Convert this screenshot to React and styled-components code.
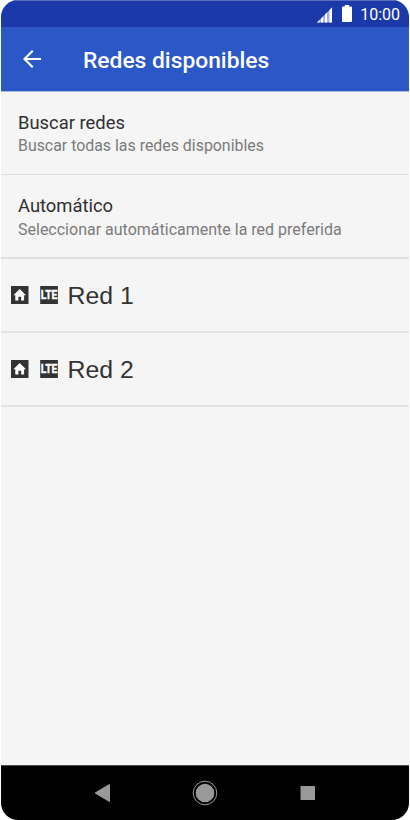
import styled, { createGlobalStyle } from "styled-components"

const GlobalStyle = createGlobalStyle`
    * {
        box-sizing: border-box;
    }
    body {
        margin: 0;
        background-color: #fff;
        font-family: Roboto, sans-serif;
    }
`

const Phone = styled.div`
    display: flex;
    flex-direction: column;
    width: 408px;
    height: 820px;
    margin-left: 1px;
    border-radius: 17px;
    overflow: hidden;
    background-color: #f5f5f5;
`

const StatusBar = styled.div`
    height: 27px;
    display: flex;
    align-items: center;
    justify-content: flex-end;
    padding: 0 9px 0 0;
    color: white;
    background-color: #1c39a9;
    border-top: 1px solid #5a6fc0;
`

const SignalIcon = styled.svg`
    display: block;
    width: 16px;
    height: 16px;
    margin-top: 1px;
`

const BatteryIcon = styled.svg`
    display: block;
    width: 10px;
    height: 17px;
    margin: 0 0 1px 9px;
`

const Clock = styled.span`
    font-size: 16px;
    line-height: 20px;
    margin: 2px 0 0 8px;
`

const Header = styled.div`
    height: 65px;
    display: flex;
    align-items: center;
    padding: 0 0 0 22px;
    color: white;
    background-color: #2b57c7;
    border-bottom: 1px solid #a9b9e3;
`

const Title = styled.h1`
    margin: 4px 0 0 41px;
    font-size: 22.8px;
    font-weight: 500;
    line-height: 28px;
    white-space: nowrap;
`

const Content = styled.div`
    flex: 1;
`

const Option = styled.div`
    height: ${props => props.height}px;
    padding: 20px 17px 0;
    border-bottom: ${props => props.line}px solid #dfdfdf;
`

const OptionTitle = styled.div`
    font-size: 18.4px;
    line-height: 22px;
    color: #303030;
`

const OptionText = styled.div`
    margin-top: ${props => props.gap}px;
    font-size: ${props => props.size}px;
    line-height: 20px;
    color: #7b7b7b;
    white-space: nowrap;
`

const Network = styled.div`
    height: 74px;
    display: flex;
    align-items: center;
    padding-left: 9px;
    border-bottom: 2px solid #e3e3e3;
    color: #333;
`

const NetworkIcon = styled.svg`
    display: block;
    width: 19px;
    height: 18px;
    margin: 0 10px 1px 0;
    overflow: visible;
`

const LteText = styled.text`
    fill: white;
    font-family: Roboto, sans-serif;
    font-size: 12px;
    font-weight: 700;
    stroke: white;
    stroke-width: 0.4px;
`

const NetworkName = styled.span`
    font-family: "Liberation Sans", Arial, sans-serif;
    font-size: 24.8px;
    line-height: 30px;
    margin: 2px 0 0 -0.4px;
`

const NavBar = styled.div`
    height: 55px;
    display: flex;
    align-items: center;
    background-color: #000;
    border-top: 1px solid #484d4a;
`

const NavIcon = styled.svg`
    display: block;
    width: 26px;
    height: 26px;
    margin: 0 0 1px ${props => props.$gap}px;
`

const networks = ["Red 1", "Red 2"]

const App = () => {
    return (
        <>
            <GlobalStyle />
            <Phone>
                <StatusBar>
                    <SignalIcon viewBox="0 0 16 16">
                        <path d="M0 15.5L15 0.5V15.5Z" fill="#a9b5de" />
                        <path d="M0.5 15.5V15L2.5 13V15.5ZM4 15.5V11.5L6 9.5V15.5ZM8 15.5V7.5L10 5.5V15.5ZM12.5 15.5V3L15 0.5V15.5Z" fill="#fff" />
                    </SignalIcon>
                    <BatteryIcon viewBox="0 0 10 17">
                        <path d="M2.8 0H7.2V1.6H9Q10 1.6 10 2.6V16Q10 17 9 17H1Q0 17 0 16V2.6Q0 1.6 1 1.6H2.8Z" fill="#fff" />
                    </BatteryIcon>
                    <Clock>10:00</Clock>
                </StatusBar>
                <Header>
                    <svg width="19" height="18" viewBox="0 0 19 18" fill="none" stroke="#fff" strokeWidth="2.1">
                        <path d="M18 9H1.5M9.7 0.8L1.5 9L9.7 17.2" />
                    </svg>
                    <Title>Redes disponibles</Title>
                </Header>
                <Content>
                    <Option height={83} line={1}>
                        <OptionTitle>Buscar redes</OptionTitle>
                        <OptionText gap={2} size={15.9}>Buscar todas las redes disponibles</OptionText>
                    </Option>
                    <Option height={84} line={2}>
                        <OptionTitle>Automático</OptionTitle>
                        <OptionText gap={3} size={16}>Seleccionar automáticamente la red preferida</OptionText>
                    </Option>
                    {networks.map(name => (
                        <Network key={name}>
                            <NetworkIcon viewBox="0 0 19 18">
                                <rect x="1" width="17.5" height="18" fill="#333" />
                                <path d="M9.7 3L3.4 9.3H5.3V14.5H8.4V10.8H11.1V14.5H14.1V9.3H16Z" fill="#fff" />
                            </NetworkIcon>
                            <NetworkIcon viewBox="0 0 19 18">
                                <rect x="1.2" width="17.7" height="18" fill="#333" />
                                <LteText x="1.8" y="13.3" textLength="16.6" lengthAdjust="spacingAndGlyphs">LTE</LteText>
                            </NetworkIcon>
                            <NetworkName>{name}</NetworkName>
                        </Network>
                    ))}
                </Content>
                <NavBar>
                    <NavIcon $gap={88} viewBox="0 0 26 26">
                        <path d="M6.5 12.2L20 4.2Q21 3.8 21 5V21Q21 22.2 20 21.8L6.5 13.8Q5 13 6.5 12.2Z" fill="#999" />
                    </NavIcon>
                    <NavIcon $gap={77} viewBox="0 0 26 26">
                        <circle cx="13" cy="13" r="11.8" fill="none" stroke="#999" strokeWidth="1" />
                        <circle cx="13" cy="13" r="9.3" fill="#999" />
                    </NavIcon>
                    <NavIcon $gap={77} viewBox="0 0 26 26">
                        <rect x="5.5" y="6" width="14.5" height="14" rx="0.5" fill="#999" />
                    </NavIcon>
                </NavBar>
            </Phone>
        </>
    )
}

export default App
